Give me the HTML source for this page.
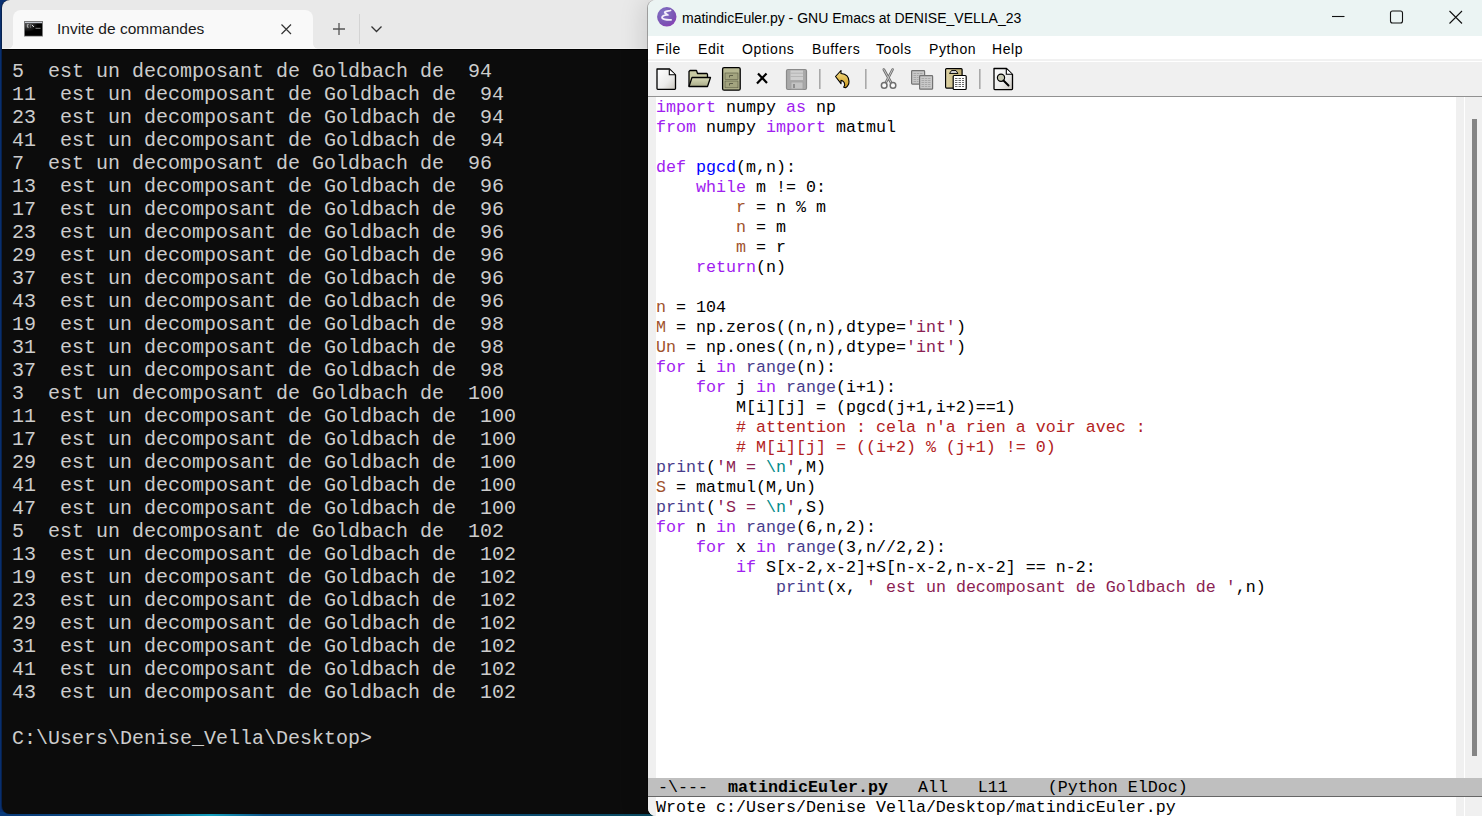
<!DOCTYPE html>
<html><head><meta charset="utf-8">
<style>
*{margin:0;padding:0;box-sizing:border-box}
html,body{width:1482px;height:816px;overflow:hidden;background:#0a3377;position:relative}
#bstrip{left:0;top:812px;width:660px;height:4px;background:linear-gradient(90deg,#0a3d80 0%,#0f5a92 20%,#16a9c9 32%,#0f5a92 40%,#0d527f 70%,#0b4f66 100%)}
.abs{position:absolute}
#term{left:2px;top:0;width:660px;height:814px;background:#0c0c0c;border-radius:8px 0 0 8px;overflow:hidden;box-shadow:-1px 0 0 rgba(0,0,0,0.28),-4px 0 26px rgba(0,0,0,0.13)}
#tabbar{left:0;top:0;width:660px;height:49px;background:#e9e9e9}
#tab{left:10.5px;top:10px;width:300.5px;height:39px;background:#f9f9f9;border-radius:8px 8px 0 0}
#tabline{left:0;top:48px;width:660px;height:1px;background:rgba(255,255,255,0.35)}
#tabblk{left:0;top:49px;width:660px;height:1px;background:#000}
#flareR{left:311px;top:44px;width:5px;height:5px;background:radial-gradient(circle at 100% 0,#e9e9e9 4.5px,#f9f9f9 5px)}
#flareL{left:5.5px;top:44px;width:5px;height:5px;background:radial-gradient(circle at 0 0,#e9e9e9 4.5px,#f9f9f9 5px)}
#tabtitle{left:55px;top:20px;font:15.5px "Liberation Sans",sans-serif;color:#1a1a1a}
#termtext{left:10px;top:60px;font:20px/23px "Liberation Mono",monospace;color:#cccccc;white-space:pre}
#emacs{left:648px;top:0;width:834px;height:816px;background:#fff;border-radius:8px 0 0 8px;overflow:hidden;box-shadow:-1px 0 0 rgba(0,0,0,0.28),-4px 0 26px rgba(0,0,0,0.13)}
#titlebar{left:0;top:0;width:834px;height:36px;background:#ebf4f3}
#title{left:34px;top:10px;font:14px "Liberation Sans",sans-serif;color:#000;white-space:nowrap}
#menubar{left:0;top:36px;width:834px;height:23px;background:#fff}
.menu{position:absolute;top:41px;font:14px "Liberation Sans",sans-serif;color:#000;letter-spacing:0.6px}
#toolbar{left:0;top:61px;width:834px;height:36px;background:#f0f0f0;border-bottom:1px solid #919191;border-top:1px solid #fff}
#mline{left:0;top:59px;width:834px;height:2px;background:#f1f1f1}
#fringeL{left:0;top:97px;width:8px;height:681px;background:#f0f0f0}
#fringeR{left:808px;top:97px;width:8px;height:681px;background:#f0f0f0}
#scroll{left:817px;top:97px;width:17px;height:681px;background:#f0f0f0}
#thumb{left:824px;top:119px;width:5px;height:637px;background:#858585}
#code{left:8px;top:98px;font:16.67px/20px "Liberation Mono",monospace;color:#000;white-space:pre}
.k{color:#a020f0}.f{color:#0000ff}.v{color:#a0522d}.b{color:#483d8b}.s{color:#8b2252}.c{color:#b22222}.e{color:#008b8b}
#modeline{left:0;top:778px;width:834px;height:19px;background:#bfbfbf;border-bottom:1px solid #666}
#modetext{left:10px;top:779px;font:16.67px/18px "Liberation Mono",monospace;color:#000;white-space:pre}
#mini{left:8px;top:798px;font:16.67px/19px "Liberation Mono",monospace;color:#000;white-space:pre}
#miniL{left:0;top:797px;width:8px;height:19px;background:#f0f0f0}
#miniR{left:808px;top:797px;width:8px;height:19px;background:#f0f0f0}
#miniS{left:817px;top:797px;width:17px;height:19px;background:#f0f0f0}
</style></head><body>
<div id="bstrip" class="abs"></div>
<div id="term" class="abs">
  <div id="tabbar" class="abs"></div>
  <div id="tab" class="abs"></div><div id="flareR" class="abs"></div><div id="flareL" class="abs"></div><div id="tabline" class="abs"></div><div id="tabblk" class="abs"></div>
  <div id="tabtitle" class="abs">Invite de commandes</div>
  <div id="termtext" class="abs">5  est un decomposant de Goldbach de  94
11  est un decomposant de Goldbach de  94
23  est un decomposant de Goldbach de  94
41  est un decomposant de Goldbach de  94
7  est un decomposant de Goldbach de  96
13  est un decomposant de Goldbach de  96
17  est un decomposant de Goldbach de  96
23  est un decomposant de Goldbach de  96
29  est un decomposant de Goldbach de  96
37  est un decomposant de Goldbach de  96
43  est un decomposant de Goldbach de  96
19  est un decomposant de Goldbach de  98
31  est un decomposant de Goldbach de  98
37  est un decomposant de Goldbach de  98
3  est un decomposant de Goldbach de  100
11  est un decomposant de Goldbach de  100
17  est un decomposant de Goldbach de  100
29  est un decomposant de Goldbach de  100
41  est un decomposant de Goldbach de  100
47  est un decomposant de Goldbach de  100
5  est un decomposant de Goldbach de  102
13  est un decomposant de Goldbach de  102
19  est un decomposant de Goldbach de  102
23  est un decomposant de Goldbach de  102
29  est un decomposant de Goldbach de  102
31  est un decomposant de Goldbach de  102
41  est un decomposant de Goldbach de  102
43  est un decomposant de Goldbach de  102

C:\Users\Denise_Vella\Desktop&gt;</div>
</div>
<div id="emacs" class="abs">
  <div id="titlebar" class="abs"></div>
  <div id="title" class="abs">matindicEuler.py - GNU Emacs at DENISE_VELLA_23</div>
  <div id="menubar" class="abs"></div>
  <span class="menu" style="left:8px">File</span>
  <span class="menu" style="left:50px">Edit</span>
  <span class="menu" style="left:94px">Options</span>
  <span class="menu" style="left:164px">Buffers</span>
  <span class="menu" style="left:228px">Tools</span>
  <span class="menu" style="left:281px">Python</span>
  <span class="menu" style="left:344px">Help</span>
  <div id="mline" class="abs"></div><div id="toolbar" class="abs"></div>
  <div id="fringeL" class="abs"></div>
  <div id="fringeR" class="abs"></div>
  <div id="scroll" class="abs"></div>
  <div id="thumb" class="abs"></div>
  <div id="code" class="abs"><span class="k">import</span> numpy <span class="k">as</span> np
<span class="k">from</span> numpy <span class="k">import</span> matmul

<span class="k">def</span> <span class="f">pgcd</span>(m,n):
    <span class="k">while</span> m != 0:
        <span class="v">r</span> = n % m
        <span class="v">n</span> = m
        <span class="v">m</span> = r
    <span class="k">return</span>(n)

<span class="v">n</span> = 104
<span class="v">M</span> = np.zeros((n,n),dtype=<span class="s">&#x27;int&#x27;</span>)
<span class="v">Un</span> = np.ones((n,n),dtype=<span class="s">&#x27;int&#x27;</span>)
<span class="k">for</span> i <span class="k">in</span> <span class="b">range</span>(n):
    <span class="k">for</span> j <span class="k">in</span> <span class="b">range</span>(i+1):
        M[i][j] = (pgcd(j+1,i+2)==1)
        <span class="c"># attention : cela n&#x27;a rien a voir avec :</span>
        <span class="c"># M[i][j] = ((i+2) % (j+1) != 0)</span>
<span class="b">print</span>(<span class="s">&#x27;M = </span><span class="e">\n</span><span class="s">&#x27;</span>,M)
<span class="v">S</span> = matmul(M,Un)
<span class="b">print</span>(<span class="s">&#x27;S = </span><span class="e">\n</span><span class="s">&#x27;</span>,S)
<span class="k">for</span> n <span class="k">in</span> <span class="b">range</span>(6,n,2):
    <span class="k">for</span> x <span class="k">in</span> <span class="b">range</span>(3,n//2,2):
        <span class="k">if</span> S[x-2,x-2]+S[n-x-2,n-x-2] == n-2:
            <span class="b">print</span>(x, <span class="s">&#x27; est un decomposant de Goldbach de &#x27;</span>,n)</div>
  <div id="modeline" class="abs"></div>
  <div id="modetext" class="abs">-\---  <b>matindicEuler.py</b>   All   L11    (Python ElDoc)</div>
  <div id="miniL" class="abs"></div>
  <div id="miniR" class="abs"></div>
  <div id="miniS" class="abs"></div>
  <div id="mini" class="abs">Wrote c:/Users/Denise Vella/Desktop/matindicEuler.py</div>
</div>
<svg class="abs" style="left:0;top:0" width="1482" height="816" viewBox="0 0 1482 816">
<defs>
<linearGradient id="gpage" x1="0" y1="0" x2="1" y2="1"><stop offset="0" stop-color="#ffffff"/><stop offset="0.6" stop-color="#ebebea"/><stop offset="1" stop-color="#c9c5bd"/></linearGradient>
<linearGradient id="gfold" x1="0" y1="0" x2="0" y2="1"><stop offset="0" stop-color="#d9dbb8"/><stop offset="1" stop-color="#a9ab88"/></linearGradient>
<linearGradient id="gundo" x1="0" y1="0" x2="0" y2="1"><stop offset="0" stop-color="#f7df86"/><stop offset="1" stop-color="#c9961a"/></linearGradient>
<radialGradient id="gemacs" cx="0.35" cy="0.3" r="0.8"><stop offset="0" stop-color="#8075c4"/><stop offset="0.7" stop-color="#7b52b4"/><stop offset="1" stop-color="#8e3cb6"/></radialGradient>
<linearGradient id="gclip" x1="0" y1="0" x2="1" y2="0"><stop offset="0" stop-color="#e6dcb0"/><stop offset="1" stop-color="#b9a66a"/></linearGradient>
<radialGradient id="gcmd" cx="0.15" cy="0.1" r="0.6"><stop offset="0" stop-color="#555"/><stop offset="1" stop-color="#000"/></radialGradient>
</defs>
<!-- terminal tab icon -->
<rect x="24.5" y="21.5" width="18" height="14.5" fill="#000" stroke="#7a7a7a" stroke-width="1"/>
<rect x="25" y="22" width="17" height="1.5" fill="#c4c8d0"/>
<rect x="25" y="23.5" width="17" height="12" fill="url(#gcmd)"/>
<path d="M28.7 24.6h-1.3v2.6h1.3" stroke="#bbb" stroke-width="0.9" fill="none"/>
<path d="M30.4 25h0.6M30.4 27h0.6" stroke="#ddd" stroke-width="0.9"/>
<path d="M32 24.8l1.8 2.2" stroke="#eee" stroke-width="1"/>
<path d="M35.5 28.3h5" stroke="#aaa" stroke-width="0.8"/>
<!-- tab close X -->
<path d="M281.5 24.5L291 34M291 24.5L281.5 34" stroke="#333" stroke-width="1.2" fill="none"/>
<!-- plus -->
<path d="M339 23v12M333 29h12" stroke="#555" stroke-width="1.3" fill="none"/>
<!-- separator -->
<path d="M359.5 14v30" stroke="#d4d4d4" stroke-width="1"/>
<!-- chevron -->
<path d="M371.5 26.5l5 5 5-5" stroke="#333" stroke-width="1.3" fill="none"/>
<!-- emacs icon -->
<circle cx="666.8" cy="16.8" r="9.7" fill="url(#gemacs)"/>
<path d="M670.5 10.5c-2 0.5-4.5 0.6-5.5 1.5c-1 1 1.5 1.6 2.6 2.8c-2.5 0.5-5.5 0.8-5.5 2.6c0 1.8 4 2.6 9 2.4" stroke="#f4eefa" stroke-width="1.8" fill="none" stroke-linecap="round"/>
<!-- window controls -->
<path d="M1332 16.5h12.5" stroke="#111" stroke-width="1.1"/>
<rect x="1390.5" y="11" width="12" height="12" rx="2" fill="none" stroke="#111" stroke-width="1.1"/>
<path d="M1449.5 11l12.5 12.5M1462 11l-12.5 12.5" stroke="#111" stroke-width="1.1"/>
<!-- toolbar: new file -->
<path d="M657 69h12.5l6 6v13.5q0 0.8-0.8 0.8h-16.9q-0.8 0-0.8-0.8z" fill="url(#gpage)" stroke="#000" stroke-width="1.3" stroke-linejoin="round"/>
<path d="M669.3 69.5v5.3h5.8" fill="#fff" stroke="#000" stroke-width="1.1"/>
<!-- open folder -->
<path d="M689 86.5v-15l1-1h6.5l1 3h9.5l0.5 1v3" fill="#c8caa2" stroke="#000" stroke-width="1.3" stroke-linejoin="round"/>
<path d="M689 86.5l3-9h18.5l-3 9z" fill="url(#gfold)" stroke="#000" stroke-width="1.3" stroke-linejoin="round"/>
<!-- cabinet -->
<rect x="722.6" y="67.6" width="17.6" height="22.6" rx="1.5" fill="#b5b690" stroke="#000" stroke-width="1.3"/>
<rect x="725" y="73" width="13" height="6.3" fill="#a3a47f" stroke="#55563f" stroke-width="0.6"/>
<rect x="725" y="81" width="13" height="6.8" fill="#a3a47f" stroke="#55563f" stroke-width="0.6"/>
<path d="M729.5 77.5v-2h3.5M729.5 85.5v-2h3.5" stroke="#4a4b38" stroke-width="0.8" fill="none"/>
<!-- kill X -->
<path d="M758 73.5l9 9.5M766.5 73.5l-9.5 10" stroke="#000" stroke-width="2.2" fill="none"/>
<!-- save (disabled) -->
<rect x="786.5" y="69.5" width="20" height="20" rx="1.5" fill="#a9a9a9" stroke="#8a8a8a" stroke-width="1.2"/>
<rect x="790.5" y="70.5" width="12.5" height="9.5" fill="#cfcfcf"/>
<path d="M790.5 73.2h12.5M790.5 76.5h12.5" stroke="#b0b0b0" stroke-width="0.8"/>
<rect x="791" y="82" width="12" height="7" fill="#c3c3c3" stroke="#a0a0a0" stroke-width="0.8"/>
<rect x="793" y="84" width="2" height="4" fill="#8e8e8e"/>
<!-- separators -->
<path d="M819.8 69v20M865.8 69v20M979.8 69v20" stroke="#a9a9a9" stroke-width="1.6"/>
<!-- undo -->
<path d="M835.5 76.5l5.5-6v3c5 0.5 8 3.5 8 8c0 2.8-1.5 5-3.5 6.3l-1.8-0.6c1.2-1.5 1.3-3.2 0.5-4.7c-0.8-1.3-2-2-3.2-2.1v3.3z" fill="url(#gundo)" stroke="#000" stroke-width="1.1" stroke-linejoin="round"/>
<!-- scissors (disabled) -->
<path d="M883.8 69.5l7.5 13.5M892.6 69.5l-7 13.5" stroke="#6e6e6e" stroke-width="2.6" stroke-linecap="round"/>
<path d="M883.8 69.5l7.5 13.5M892.6 69.5l-7 13.5" stroke="#c4c4c4" stroke-width="1" stroke-linecap="round"/>
<circle cx="884.2" cy="85.4" r="2.8" fill="#fafafa" stroke="#6e6e6e" stroke-width="1.5"/>
<circle cx="893" cy="85.4" r="2.8" fill="#fafafa" stroke="#6e6e6e" stroke-width="1.5"/>
<!-- copy (disabled) -->
<rect x="911.6" y="70.6" width="13" height="13.5" rx="0.8" fill="#c9c9c9" stroke="#737373" stroke-width="1.2"/>
<rect x="919.6" y="75.6" width="13" height="13.6" rx="0.8" fill="#c9c9c9" stroke="#737373" stroke-width="1.2"/>
<path d="M913.5 73.5h9M913.5 75.5h5M913.5 77.5h5M913.5 79.5h5M913.5 81.5h5M921.5 78.5h9M921.5 80.5h9M921.5 82.5h9M921.5 84.5h9M921.5 86.5h9" stroke="#9a9a9a" stroke-width="0.7" stroke-dasharray="2.5 0.8"/>
<!-- paste -->
<rect x="945.6" y="68.6" width="16.5" height="19.5" rx="1" fill="url(#gclip)" stroke="#000" stroke-width="1.2"/>
<path d="M947 72h14M947 74h14M947 76h14M947 78h14M947 80h14M947 82h14M947 84h14M947 86h14" stroke="#cdbf8c" stroke-width="0.6"/>
<path d="M949.5 73.5l2-3h4.5l2 3z" fill="#cfcfcf" stroke="#000" stroke-width="0.9"/>
<rect x="953.2" y="75.5" width="13" height="14" rx="1" fill="#fff" stroke="#000" stroke-width="1.2"/>
<path d="M955 78.5h9M955 80.5h9M955 82.5h9M955 84.5h9M955 86.5h9" stroke="#444" stroke-width="0.8" stroke-dasharray="2.5 1"/>
<!-- search page -->
<path d="M994 68.5h12.5l6 6v14.3q0 0.8-0.8 0.8h-16.9q-0.8 0-0.8-0.8z" fill="url(#gpage)" stroke="#000" stroke-width="1.3" stroke-linejoin="round"/>
<path d="M1006.3 69v5.3h5.8" fill="#fff" stroke="#000" stroke-width="1.1"/>
<circle cx="1001" cy="77.8" r="3.6" fill="#c8cab4" stroke="#000" stroke-width="1.2"/>
<path d="M1003.5 80.5l5 5" stroke="#000" stroke-width="2" stroke-linecap="round"/>
</svg>

</body></html>
